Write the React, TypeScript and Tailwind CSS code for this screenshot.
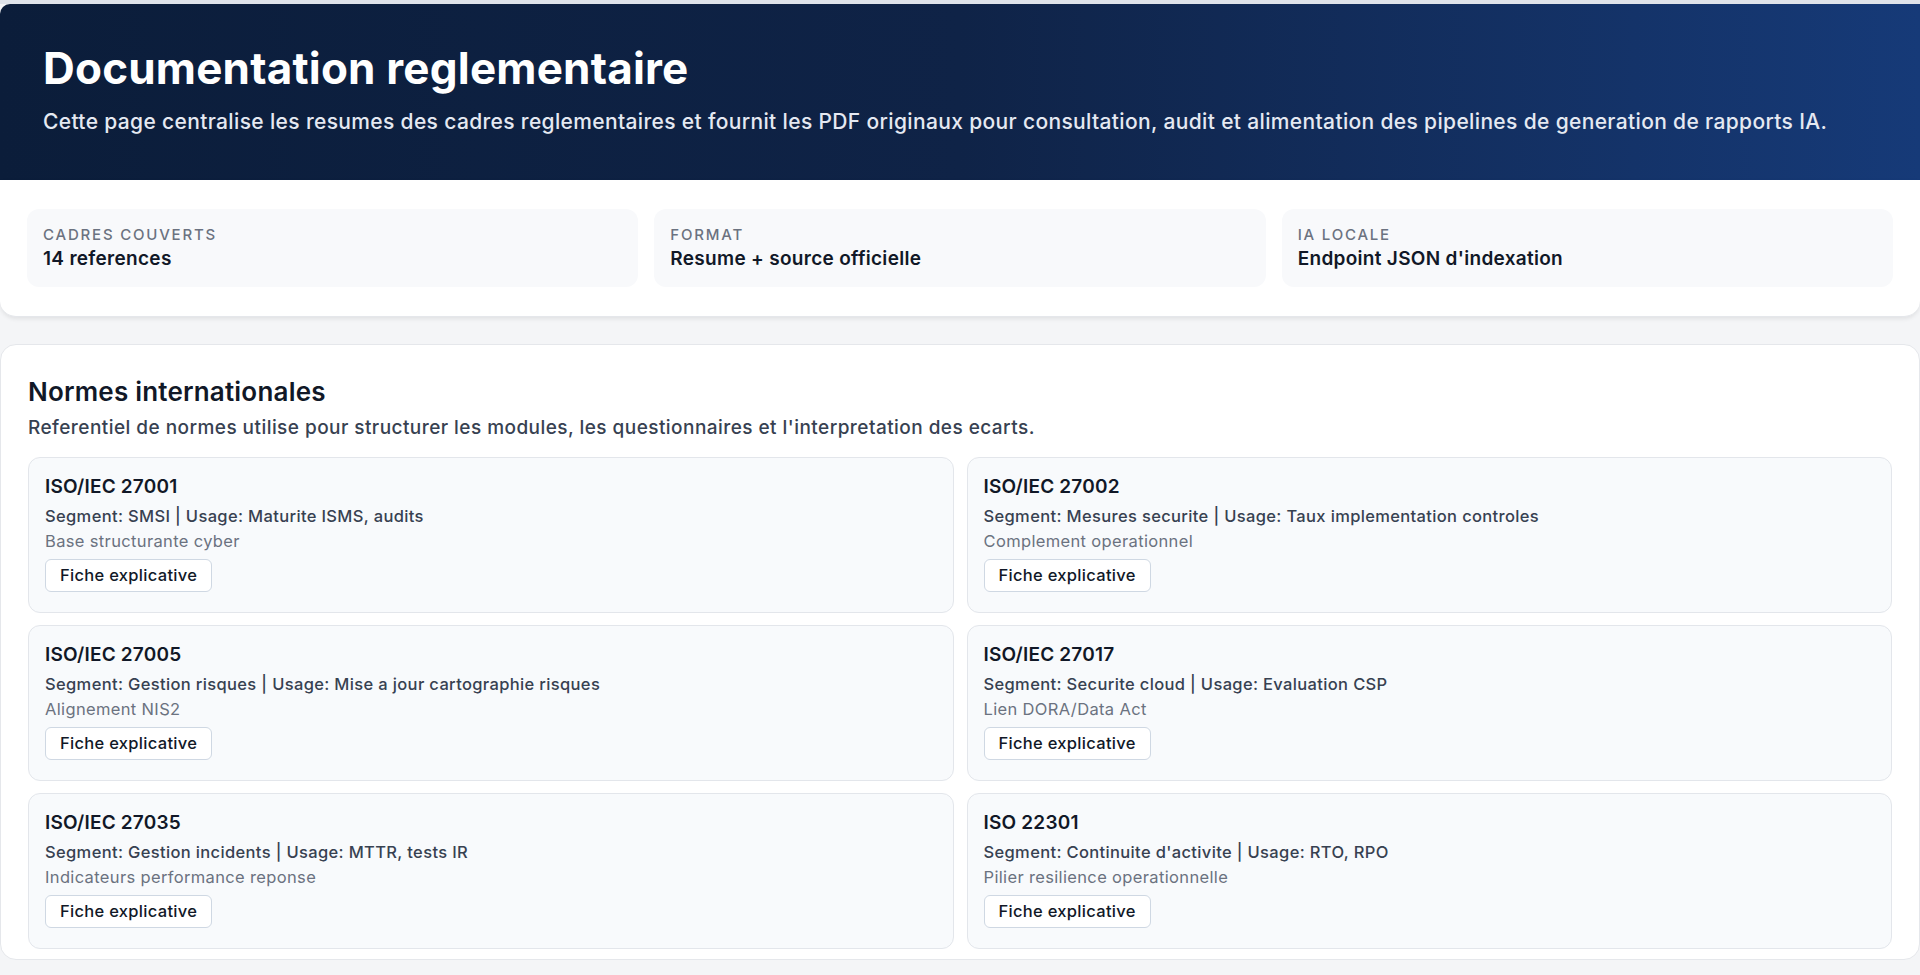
import React from "react";

const items = [
  ["ISO/IEC 27001", "Segment: SMSI | Usage: Maturite ISMS, audits", "Base structurante cyber"],
  ["ISO/IEC 27002", "Segment: Mesures securite | Usage: Taux implementation controles", "Complement operationnel"],
  ["ISO/IEC 27005", "Segment: Gestion risques | Usage: Mise a jour cartographie risques", "Alignement NIS2"],
  ["ISO/IEC 27017", "Segment: Securite cloud | Usage: Evaluation CSP", "Lien DORA/Data Act"],
  ["ISO/IEC 27035", "Segment: Gestion incidents | Usage: MTTR, tests IR", "Indicateurs performance reponse"],
  ["ISO 22301", "Segment: Continuite d'activite | Usage: RTO, RPO", "Pilier resilience operationnelle"],
];

const stats = [
  ["CADRES COUVERTS", "14 references"],
  ["FORMAT", "Resume + source officielle"],
  ["IA LOCALE", "Endpoint JSON d'indexation"],
];

export default function App() {
  return (
    <div className="min-h-screen bg-[#f4f5f7] text-[#111827]" style={{ fontFamily: "Inter, 'Noto Sans', sans-serif" }}>
      <div className="h-[4px] bg-[#dfe3ea]" />
      <header className="bg-gradient-to-r from-[#0b1d3a] via-[#0f2347] to-[#163a78] px-[43px] pt-[38px] pb-[42px] rounded-tl-[10px]">
        <h1 className="text-[44px] font-bold text-white leading-[52px] tracking-[0.2px]">Documentation reglementaire</h1>
        <p className="mt-[12px] text-[21px] leading-[32px] text-[#e5e9f2] font-medium tracking-[0.35px] max-w-[1820px]">
          Cette page centralise les resumes des cadres reglementaires et fournit les PDF originaux pour consultation, audit et alimentation des pipelines de generation de rapports IA.
        </p>
      </header>
      <section className="bg-white rounded-b-[16px] shadow-[0_2px_4px_rgba(0,0,0,0.08)] border-b border-[#e5e7eb] px-[27px] py-[29px]">
        <div className="grid grid-cols-3 gap-[16px]">
          {stats.map(([l, v]) => (
            <div key={l} className="bg-[#f8f9fb] rounded-[12px] px-[16px] py-[15px] h-[78px]">
              <div className="text-[15px] tracking-[1.8px] text-[#6b7280] font-medium leading-[22px]">{l}</div>
              <div className="text-[19px] font-semibold leading-[26px] tracking-[0.3px] text-[#111827]">{v}</div>
            </div>
          ))}
        </div>
      </section>
      <section className="mt-[27px] bg-white rounded-[16px] border border-[#e5e7eb] px-[27px] pt-[30px] pb-[10px]">
        <h2 className="text-[26px] font-semibold leading-[34px] tracking-[0.2px]">Normes internationales</h2>
        <p className="mt-[5px] text-[19px] text-[#374151] font-medium leading-[28px] tracking-[0.45px]">
          Referentiel de normes utilise pour structurer les modules, les questionnaires et l'interpretation des ecarts.
        </p>
        <div className="mt-[15px] grid grid-cols-2 gap-x-[13px] gap-y-[12px]">
          {items.map(([t, s, n]) => (
            <div key={t} className="bg-[#f8fafc] border border-[#e3e6eb] rounded-[12px] px-[16px] pt-[17px] pb-[16px] h-[156px]">
              <div className="text-[19px] font-semibold leading-[24px] tracking-[0.2px]">{t}</div>
              <div className="mt-[6px] text-[16.5px] text-[#374151] font-medium leading-[22px] tracking-[0.35px]">{s}</div>
              <div className="mt-[3px] text-[16.5px] text-[#6b7280] leading-[22px] tracking-[0.35px]">{n}</div>
              <button className="mt-[7px] h-[33px] px-[14px] rounded-[6px] bg-white border border-[#cfd8e3] text-[16.5px] font-medium tracking-[0.3px] text-[#111827]">
                Fiche explicative
              </button>
            </div>
          ))}
        </div>
      </section>
    </div>
  );
}
